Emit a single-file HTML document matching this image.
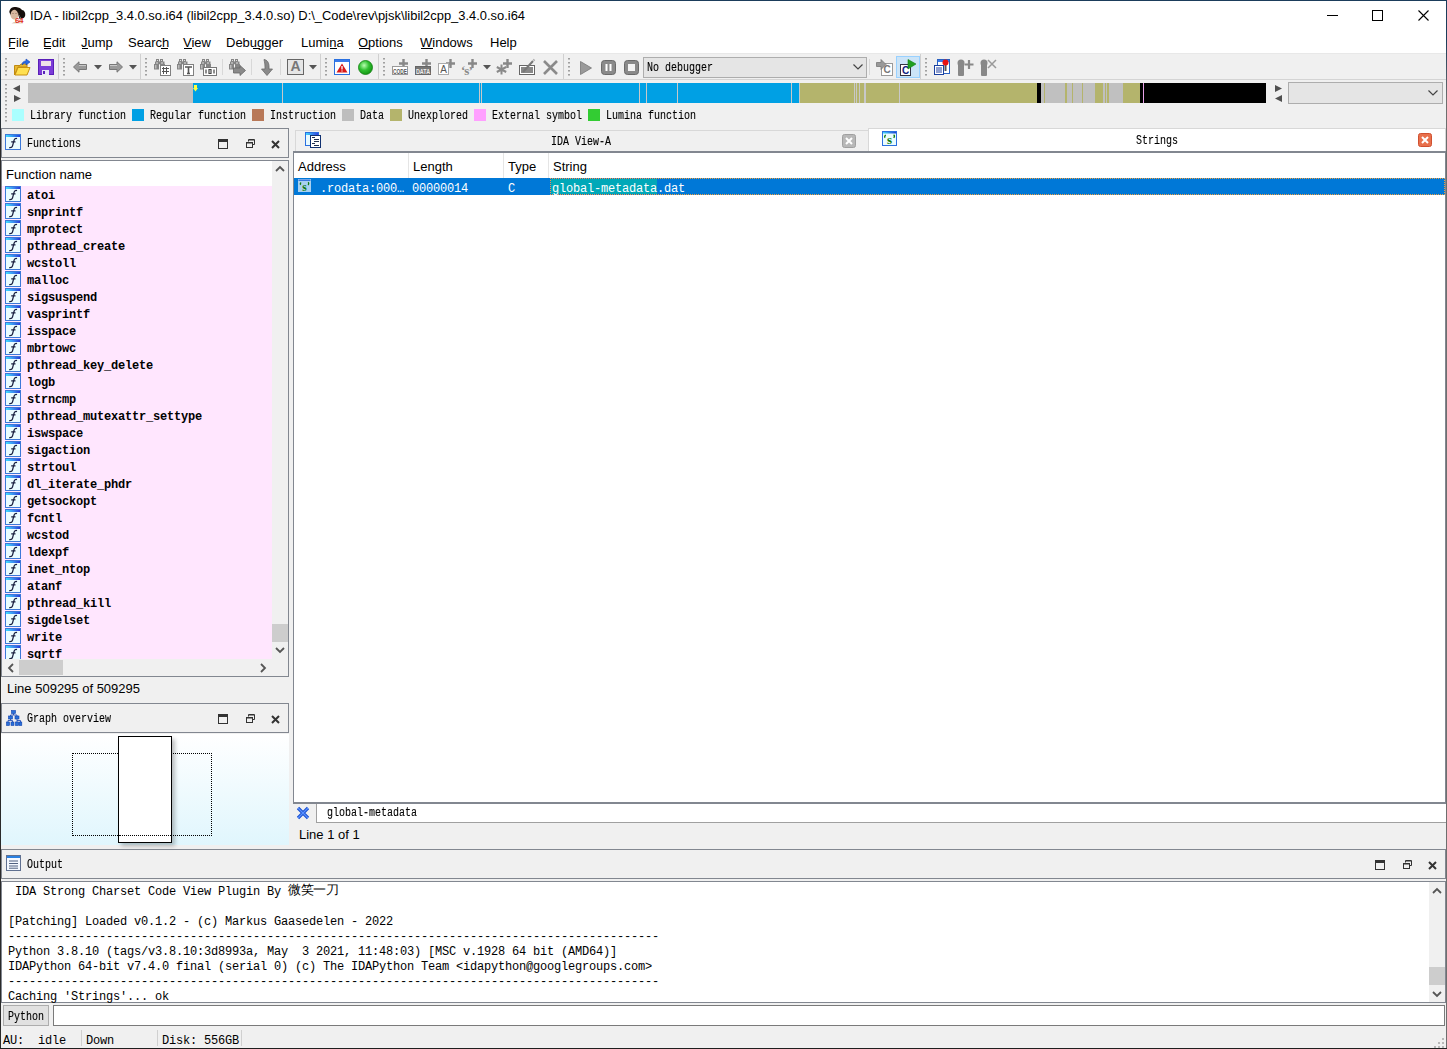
<!DOCTYPE html>
<html><head><meta charset="utf-8">
<style>
*{margin:0;padding:0;box-sizing:border-box}
html,body{width:1447px;height:1049px;overflow:hidden;background:#f0f0f0}
body{position:relative;font-family:"Liberation Sans",sans-serif;font-size:13px;color:#000}
.a{position:absolute;white-space:nowrap}
.m{font-family:"Liberation Mono",monospace}
.ss{font-family:"Liberation Mono",monospace;font-size:12px;transform:scaleX(0.8333);transform-origin:0 0;-webkit-text-stroke:0.12px #000}
.bx{position:absolute;border:1px solid #828790}
svg{position:absolute;overflow:visible}
u{text-decoration:none;border-bottom:1px solid #000}
</style></head><body>
<svg width="0" height="0" style="position:absolute"><defs><linearGradient id="gtop" x1="0" x2="1"><stop offset="0" stop-color="#40e0ff"/><stop offset="0.5" stop-color="#3a90f0"/><stop offset="1" stop-color="#2a3ad8"/></linearGradient></defs></svg>
<!-- ============ TITLE + MENU ============ -->
<div class="a" style="left:0;top:0;width:1447px;height:53px;background:#fff"></div>
<div class="a" style="left:0;top:53px;width:1447px;height:1px;background:#e8e8e8"></div>
<svg style="left:9px;top:6px" width="17" height="18"><ellipse cx="5.5" cy="8" rx="4.2" ry="5.5" fill="#d8b8a0"/><path d="M0.3 6C0.8 2 4 0.8 7 1.1C10 1.4 12 2.8 13 4C15.5 4.2 16.6 7 16.2 9.5C15.8 12 13.5 12.8 12 12.2C10.5 10 9.5 7.5 8 5.2C6.5 3.2 3.5 2.8 2 6.5L1.5 9Z" fill="#160e0a"/><path d="M8.5 6C10 8 11 11 12 12.5L10.5 13Z" fill="#2a1a14"/><path d="M2.5 17.2C5 16 9 16 14.5 17.2Z" fill="#c8a088"/><text x="6" y="16.5" font-family="Liberation Sans" font-size="8" font-weight="bold" fill="#e03018" letter-spacing="-0.5">64</text><circle cx="4" cy="7.5" r="0.6" fill="#8a6a5a"/><circle cx="7" cy="7.5" r="0.6" fill="#8a6a5a"/></svg>
<div class="a" style="left:30px;top:8px;font-size:12.92px">IDA - libil2cpp_3.4.0.so.i64 (libil2cpp_3.4.0.so) D:\_Code\rev\pjsk\libil2cpp_3.4.0.so.i64</div>
<div class="a" style="left:1327px;top:15px;width:11px;height:1px;background:#000"></div>
<div class="a" style="left:1372px;top:10px;width:11px;height:11px;border:1px solid #000"></div>
<svg style="left:1418px;top:10px" width="11" height="11"><path d="M0.5 0.5L10.5 10.5M10.5 0.5L0.5 10.5" stroke="#000" stroke-width="1.1"/></svg>
<div class="a" style="left:-1px;top:35px;font-size:13px">
<span class="a" style="left:9px">File</span>
<span class="a" style="left:44px">Edit</span>
<span class="a" style="left:82px">Jump</span>
<span class="a" style="left:129px">Search</span>
<span class="a" style="left:184px">View</span>
<span class="a" style="left:227px">Debugger</span>
<span class="a" style="left:302px">Lumina</span>
<span class="a" style="left:359px">Options</span>
<span class="a" style="left:421px">Windows</span>
<span class="a" style="left:491px">Help</span>
</div>
<div class="a" style="left:9px;top:48px;width:6px;height:1px;background:#000"></div>
<div class="a" style="left:44px;top:48px;width:7px;height:1px;background:#000"></div>
<div class="a" style="left:82px;top:48px;width:6px;height:1px;background:#000"></div>
<div class="a" style="left:161px;top:48px;width:7px;height:1px;background:#000"></div>
<div class="a" style="left:184px;top:48px;width:8px;height:1px;background:#000"></div>
<div class="a" style="left:253px;top:48px;width:7px;height:1px;background:#000"></div>
<div class="a" style="left:330px;top:48px;width:7px;height:1px;background:#000"></div>
<div class="a" style="left:359px;top:48px;width:10px;height:1px;background:#000"></div>
<div class="a" style="left:421px;top:48px;width:12px;height:1px;background:#000"></div>

<!-- ============ TOOLBAR ============ -->
<div class="a" style="left:0;top:79px;width:1447px;height:1px;background:#d4d4d4"></div>
<div class="a" style="left:5px;top:58px;width:2px;height:2px;background:#c4c4c4;border-top:1px solid #a0a0a0"></div><div class="a" style="left:5px;top:62px;width:2px;height:2px;background:#c4c4c4;border-top:1px solid #a0a0a0"></div><div class="a" style="left:5px;top:66px;width:2px;height:2px;background:#c4c4c4;border-top:1px solid #a0a0a0"></div><div class="a" style="left:5px;top:70px;width:2px;height:2px;background:#c4c4c4;border-top:1px solid #a0a0a0"></div><div class="a" style="left:5px;top:74px;width:2px;height:2px;background:#c4c4c4;border-top:1px solid #a0a0a0"></div>
<svg style="left:14px;top:59px" width="17" height="17"><path d="M0.5 6.5H6L7 5H13V8H4L0.5 16Z" fill="#e8b830" stroke="#c08a10"/><path d="M1 16L4 8.5H16L13 16Z" fill="#ffe050" stroke="#c89010"/><path d="M8 6C8 3 10 2 12 2V0L16 3L12 6V4C10 4 9 5 8 6Z" fill="#2a6ee8" stroke="#1040b0" stroke-width="0.6"/></svg>
<svg style="left:38px;top:59px" width="16" height="16"><rect x="0.5" y="0.5" width="15" height="15" fill="#7c3cd8" stroke="#5a1fb8"/><rect x="3" y="2" width="10" height="5" fill="#f0e0e8"/><rect x="4" y="11" width="7" height="5" fill="#e8e8f8"/><rect x="5" y="12" width="2" height="3" fill="#5a1fb8"/></svg>
<div class="a" style="left:58px;top:54px;width:1px;height:25px;background:#d0d0d0"></div>
<div class="a" style="left:63px;top:58px;width:2px;height:2px;background:#c4c4c4;border-top:1px solid #a0a0a0"></div><div class="a" style="left:63px;top:62px;width:2px;height:2px;background:#c4c4c4;border-top:1px solid #a0a0a0"></div><div class="a" style="left:63px;top:66px;width:2px;height:2px;background:#c4c4c4;border-top:1px solid #a0a0a0"></div><div class="a" style="left:63px;top:70px;width:2px;height:2px;background:#c4c4c4;border-top:1px solid #a0a0a0"></div><div class="a" style="left:63px;top:74px;width:2px;height:2px;background:#c4c4c4;border-top:1px solid #a0a0a0"></div>
<svg style="left:73px;top:61px" width="14" height="12"><path d="M0.5 6L6 0.8V3.5H13.5V8.5H6V11.2Z" fill="#9a9a9a" stroke="#777" stroke-width="1"/><path d="M6 4.5H13" stroke="#c8c8c8"/></svg>
<svg style="left:94px;top:65px" width="8" height="5"><path d="M0 0H8L4 4.5Z" fill="#555"/></svg>
<svg style="left:109px;top:61px" width="14" height="12"><path d="M13.5 6L8 0.8V3.5H0.5V8.5H8V11.2Z" fill="#9a9a9a" stroke="#777" stroke-width="1"/><path d="M1 4.5H8" stroke="#c8c8c8"/></svg>
<svg style="left:129px;top:65px" width="8" height="5"><path d="M0 0H8L4 4.5Z" fill="#555"/></svg>
<div class="a" style="left:140px;top:54px;width:1px;height:25px;background:#d0d0d0"></div>
<div class="a" style="left:145px;top:58px;width:2px;height:2px;background:#c4c4c4;border-top:1px solid #a0a0a0"></div><div class="a" style="left:145px;top:62px;width:2px;height:2px;background:#c4c4c4;border-top:1px solid #a0a0a0"></div><div class="a" style="left:145px;top:66px;width:2px;height:2px;background:#c4c4c4;border-top:1px solid #a0a0a0"></div><div class="a" style="left:145px;top:70px;width:2px;height:2px;background:#c4c4c4;border-top:1px solid #a0a0a0"></div><div class="a" style="left:145px;top:74px;width:2px;height:2px;background:#c4c4c4;border-top:1px solid #a0a0a0"></div>
<svg style="left:154px;top:59px" width="11" height="11"><g fill="#858585"><rect x="2" y="0" width="3" height="3"/><rect x="1" y="2.5" width="5" height="3"/><rect x="0" y="5" width="5" height="5.5"/><rect x="6" y="0" width="3" height="3"/><rect x="5.5" y="2.5" width="5" height="3"/><rect x="6" y="5" width="5" height="5.5"/></g><rect x="3" y="1" width="1" height="1" fill="#ddd"/><rect x="7" y="1" width="1" height="1" fill="#ddd"/><rect x="2" y="3.5" width="2" height="1" fill="#ddd"/><rect x="7" y="3.5" width="2" height="1" fill="#ddd"/><rect x="1" y="6" width="1.5" height="3.5" fill="#bbb"/><rect x="5" y="5.5" width="1" height="1" fill="#fff"/></svg>
<svg style="left:160px;top:65px" width="11" height="11"><rect x="0.5" y="0.5" width="10" height="10" fill="#fff" stroke="#808080"/><path d="M3.5 2V9M6.5 2V9M2 3.5H9M2 6.5H9" stroke="#555" stroke-width="1"/></svg>
<svg style="left:177px;top:59px" width="11" height="11"><g fill="#858585"><rect x="2" y="0" width="3" height="3"/><rect x="1" y="2.5" width="5" height="3"/><rect x="0" y="5" width="5" height="5.5"/><rect x="6" y="0" width="3" height="3"/><rect x="5.5" y="2.5" width="5" height="3"/><rect x="6" y="5" width="5" height="5.5"/></g><rect x="3" y="1" width="1" height="1" fill="#ddd"/><rect x="7" y="1" width="1" height="1" fill="#ddd"/><rect x="2" y="3.5" width="2" height="1" fill="#ddd"/><rect x="7" y="3.5" width="2" height="1" fill="#ddd"/><rect x="1" y="6" width="1.5" height="3.5" fill="#bbb"/><rect x="5" y="5.5" width="1" height="1" fill="#fff"/></svg>
<svg style="left:183px;top:64px" width="11" height="12"><rect x="0.5" y="0.5" width="10" height="11" fill="#fff" stroke="#808080"/><path d="M2 3H9M5.5 3V9.5M4 9.5H7" stroke="#555" stroke-width="1.6"/></svg>
<svg style="left:200px;top:59px" width="11" height="11"><g fill="#858585"><rect x="2" y="0" width="3" height="3"/><rect x="1" y="2.5" width="5" height="3"/><rect x="0" y="5" width="5" height="5.5"/><rect x="6" y="0" width="3" height="3"/><rect x="5.5" y="2.5" width="5" height="3"/><rect x="6" y="5" width="5" height="5.5"/></g><rect x="3" y="1" width="1" height="1" fill="#ddd"/><rect x="7" y="1" width="1" height="1" fill="#ddd"/><rect x="2" y="3.5" width="2" height="1" fill="#ddd"/><rect x="7" y="3.5" width="2" height="1" fill="#ddd"/><rect x="1" y="6" width="1.5" height="3.5" fill="#bbb"/><rect x="5" y="5.5" width="1" height="1" fill="#fff"/></svg>
<svg style="left:203px;top:67px" width="14" height="9"><rect x="0.5" y="0.5" width="13" height="8" fill="#fff" stroke="#777"/><path d="M3 2.5V6.5M6 2.5H8V6.5H6ZM11 2.5V6.5" fill="none" stroke="#444" stroke-width="1.2"/></svg>
<div class="a" style="left:222px;top:59px;width:1px;height:16px;background:#d8d8d8"></div>
<svg style="left:229px;top:59px" width="11" height="11"><g fill="#858585"><rect x="2" y="0" width="3" height="3"/><rect x="1" y="2.5" width="5" height="3"/><rect x="0" y="5" width="5" height="5.5"/><rect x="6" y="0" width="3" height="3"/><rect x="5.5" y="2.5" width="5" height="3"/><rect x="6" y="5" width="5" height="5.5"/></g><rect x="3" y="1" width="1" height="1" fill="#ddd"/><rect x="7" y="1" width="1" height="1" fill="#ddd"/><rect x="2" y="3.5" width="2" height="1" fill="#ddd"/><rect x="7" y="3.5" width="2" height="1" fill="#ddd"/><rect x="1" y="6" width="1.5" height="3.5" fill="#bbb"/><rect x="5" y="5.5" width="1" height="1" fill="#fff"/></svg>
<svg style="left:233px;top:65px" width="13" height="11"><path d="M0.5 3H7V0.5L12.5 5.5L7 10.5V8H0.5Z" fill="#8a8a8a" stroke="#666" stroke-width="0.8"/></svg>
<div class="a" style="left:251px;top:59px;width:1px;height:16px;background:#d8d8d8"></div>
<svg style="left:261px;top:59px" width="12" height="17"><path d="M3 0.5C6 1 8 3 8 8V10H11.5L6 16.5L0.5 10H4V8C4 5 3.5 3 3 0.5Z" fill="#8a8a8a" stroke="#6a6a6a" stroke-width="0.8"/></svg>
<div class="a" style="left:280px;top:59px;width:1px;height:16px;background:#d8d8d8"></div>
<div class="a" style="left:287px;top:59px;width:17px;height:16px;border:1px solid #666;background:#e6e6e6"></div>
<div class="a" style="left:289px;top:58px;width:13px;text-align:center;font:bold 14px 'Liberation Sans';color:#777;line-height:17px">A</div>
<svg style="left:309px;top:65px" width="8" height="5"><path d="M0 0H8L4 4.5Z" fill="#555"/></svg>
<div class="a" style="left:320px;top:54px;width:1px;height:25px;background:#d0d0d0"></div>
<div class="a" style="left:325px;top:58px;width:2px;height:2px;background:#c4c4c4;border-top:1px solid #a0a0a0"></div><div class="a" style="left:325px;top:62px;width:2px;height:2px;background:#c4c4c4;border-top:1px solid #a0a0a0"></div><div class="a" style="left:325px;top:66px;width:2px;height:2px;background:#c4c4c4;border-top:1px solid #a0a0a0"></div><div class="a" style="left:325px;top:70px;width:2px;height:2px;background:#c4c4c4;border-top:1px solid #a0a0a0"></div><div class="a" style="left:325px;top:74px;width:2px;height:2px;background:#c4c4c4;border-top:1px solid #a0a0a0"></div>
<svg style="left:334px;top:59px" width="16" height="16"><rect x="0.5" y="0.5" width="15" height="15" fill="#fff" stroke="#2a70e0"/><rect x="1" y="1" width="14" height="2" fill="#3a7aea"/><path d="M8 4.5L13.5 13.5H2.5Z" fill="#d81818"/><path d="M8 7V10.5M8 11.5V12.5" stroke="#fff" stroke-width="1.3"/></svg>
<svg style="left:358px;top:60px" width="15" height="15"><defs><radialGradient id="gb" cx="0.4" cy="0.35" r="0.7"><stop offset="0" stop-color="#b8ffb0"/><stop offset="0.5" stop-color="#30c030"/><stop offset="1" stop-color="#109010"/></radialGradient></defs><circle cx="7.5" cy="7.5" r="7" fill="url(#gb)" stroke="#108010" stroke-width="0.8"/></svg>
<div class="a" style="left:378px;top:54px;width:1px;height:25px;background:#d0d0d0"></div>
<div class="a" style="left:383px;top:58px;width:2px;height:2px;background:#c4c4c4;border-top:1px solid #a0a0a0"></div><div class="a" style="left:383px;top:62px;width:2px;height:2px;background:#c4c4c4;border-top:1px solid #a0a0a0"></div><div class="a" style="left:383px;top:66px;width:2px;height:2px;background:#c4c4c4;border-top:1px solid #a0a0a0"></div><div class="a" style="left:383px;top:70px;width:2px;height:2px;background:#c4c4c4;border-top:1px solid #a0a0a0"></div><div class="a" style="left:383px;top:74px;width:2px;height:2px;background:#c4c4c4;border-top:1px solid #a0a0a0"></div>
<svg style="left:399px;top:59px" width="9" height="9"><path d="M4.5 0V9M0 4.5H9" stroke="#888" stroke-width="2.4"/></svg>
<svg style="left:392px;top:66px" width="16" height="9"><rect x="0.5" y="0.5" width="15" height="8" fill="#fff" stroke="#999"/><text x="8" y="7.5" font-family="Liberation Sans" font-size="7.5" font-weight="bold" text-anchor="middle" fill="#555" textLength="14" lengthAdjust="spacingAndGlyphs">CODE</text></svg>
<svg style="left:422px;top:59px" width="9" height="9"><path d="M4.5 0V9M0 4.5H9" stroke="#888" stroke-width="2.4"/></svg>
<svg style="left:415px;top:66px" width="16" height="9"><rect x="0.5" y="0.5" width="15" height="8" fill="#777" stroke="#666"/><text x="8" y="7.5" font-family="Liberation Sans" font-size="7.5" font-weight="bold" text-anchor="middle" fill="#eee" textLength="14" lengthAdjust="spacingAndGlyphs">DATA</text></svg>
<svg style="left:446px;top:59px" width="9" height="9"><path d="M4.5 0V9M0 4.5H9" stroke="#888" stroke-width="2.4"/></svg>
<svg style="left:438px;top:63px" width="11" height="12"><rect x="0.5" y="0.5" width="10" height="11" fill="#fff" stroke="#aaa"/><text x="5.5" y="10" font-family="Liberation Sans" font-size="10" text-anchor="middle" fill="#555">A</text></svg>
<svg style="left:468px;top:59px" width="9" height="9"><path d="M4.5 0V9M0 4.5H9" stroke="#888" stroke-width="2.4"/></svg>
<div class="a" style="left:461px;top:63px;font:bold 13px 'Liberation Serif';color:#8a8a8a;letter-spacing:-1px">‘s’</div>
<svg style="left:483px;top:65px" width="8" height="5"><path d="M0 0H8L4 4.5Z" fill="#555"/></svg>
<svg style="left:503px;top:59px" width="9" height="9"><path d="M4.5 0V9M0 4.5H9" stroke="#888" stroke-width="2.4"/></svg>
<svg style="left:496px;top:64px" width="11" height="11"><path d="M5.5 0.5V10.5M0.8 3L10.2 8M0.8 8L10.2 3" stroke="#8a8a8a" stroke-width="2"/></svg>
<svg style="left:519px;top:59px" width="17" height="17"><rect x="0.5" y="6.5" width="15" height="9" fill="#fff" stroke="#666"/><rect x="2" y="8" width="12" height="6" fill="#888"/><path d="M4 13L14 2" stroke="#777" stroke-width="2"/><path d="M14.5 1.5L15.5 0.5" stroke="#aaa" stroke-width="2"/></svg>
<svg style="left:543px;top:60px" width="15" height="15"><path d="M1 1L14 14M14 1L1 14" stroke="#8a8a8a" stroke-width="2.6"/></svg>
<div class="a" style="left:563px;top:54px;width:1px;height:25px;background:#d0d0d0"></div>
<div class="a" style="left:568px;top:58px;width:2px;height:2px;background:#c4c4c4;border-top:1px solid #a0a0a0"></div><div class="a" style="left:568px;top:62px;width:2px;height:2px;background:#c4c4c4;border-top:1px solid #a0a0a0"></div><div class="a" style="left:568px;top:66px;width:2px;height:2px;background:#c4c4c4;border-top:1px solid #a0a0a0"></div><div class="a" style="left:568px;top:70px;width:2px;height:2px;background:#c4c4c4;border-top:1px solid #a0a0a0"></div><div class="a" style="left:568px;top:74px;width:2px;height:2px;background:#c4c4c4;border-top:1px solid #a0a0a0"></div>
<svg style="left:580px;top:61px" width="12" height="14"><path d="M0.5 0.5L11.5 7L0.5 13.5Z" fill="#9a9a9a" stroke="#777" stroke-width="0.8"/></svg>
<svg style="left:601px;top:60px" width="15" height="15"><rect x="0.5" y="0.5" width="14" height="14" rx="3" fill="#8a8a8a" stroke="#6a6a6a"/><rect x="4.5" y="4" width="2" height="7" fill="#fff"/><rect x="8.5" y="4" width="2" height="7" fill="#fff"/></svg>
<svg style="left:624px;top:60px" width="15" height="15"><rect x="0.5" y="0.5" width="14" height="14" rx="3" fill="#8a8a8a" stroke="#6a6a6a"/><rect x="4" y="4" width="7" height="7" fill="#f4f4f4"/></svg>
<div class="a" style="left:643px;top:57px;width:224px;height:21px;border:1px solid #adadad;background:#e5e5e5"></div>
<div class="a ss" style="left:647px;top:61px">No debugger</div>
<svg style="left:853px;top:64px" width="10" height="6"><path d="M0.5 0.5L5 5L9.5 0.5" fill="none" stroke="#444" stroke-width="1.2"/></svg>
<div class="a" style="left:869px;top:59px;width:1px;height:16px;background:#d8d8d8"></div>
<svg style="left:876px;top:59px" width="17" height="17"><rect x="5.5" y="4.5" width="11" height="12" fill="#fff" stroke="#999"/><text x="11" y="14" font-family="Liberation Sans" font-size="10" font-weight="bold" text-anchor="middle" fill="#777">C</text><path d="M0.5 3.5H5V0.5L10 5.5L5 10.5V7.5H0.5Z" fill="#999" stroke="#777" stroke-width="0.8"/></svg>
<div class="a" style="left:896px;top:56px;width:24px;height:22px;border:1px solid #99d1ff;background:#cce4f7"></div>
<svg style="left:900px;top:59px" width="17" height="17"><rect x="0.5" y="5.5" width="10" height="11" fill="#fff" stroke="#334"/><text x="5.5" y="14.5" font-family="Liberation Sans" font-size="10" font-weight="bold" text-anchor="middle" fill="#102080">C</text><path d="M8 0.5L16 5L8 10Z" fill="#20a020" stroke="#108010" stroke-width="0.6"/></svg>
<div class="a" style="left:920px;top:54px;width:1px;height:25px;background:#d0d0d0"></div>
<div class="a" style="left:925px;top:58px;width:2px;height:2px;background:#c4c4c4;border-top:1px solid #a0a0a0"></div><div class="a" style="left:925px;top:62px;width:2px;height:2px;background:#c4c4c4;border-top:1px solid #a0a0a0"></div><div class="a" style="left:925px;top:66px;width:2px;height:2px;background:#c4c4c4;border-top:1px solid #a0a0a0"></div><div class="a" style="left:925px;top:70px;width:2px;height:2px;background:#c4c4c4;border-top:1px solid #a0a0a0"></div><div class="a" style="left:925px;top:74px;width:2px;height:2px;background:#c4c4c4;border-top:1px solid #a0a0a0"></div>
<svg style="left:934px;top:59px" width="17" height="17"><rect x="3.5" y="0.5" width="12" height="14" fill="#fff" stroke="#2a60c0"/><rect x="4" y="1" width="11" height="2" fill="#3a7aea"/><rect x="0.5" y="6.5" width="9" height="9" fill="#fff" stroke="#1a40a0"/><path d="M2 9H8M2 11H8M2 13H8" stroke="#2040a0"/><path d="M11.5 5V12" stroke="#555" stroke-width="2"/><circle cx="11.5" cy="3.5" r="3" fill="#e81010"/></svg>
<svg style="left:957px;top:59px" width="17" height="17"><rect x="1" y="5" width="6" height="12" rx="1" fill="#888"/><circle cx="4" cy="4" r="3.5" fill="#888"/><path d="M12 1V10M7.5 5.5H16.5" stroke="#888" stroke-width="2.2"/></svg>
<svg style="left:980px;top:59px" width="17" height="17"><rect x="1" y="5" width="6" height="12" rx="1" fill="#888"/><circle cx="4" cy="4" r="3.5" fill="#888"/><path d="M8 1L16 9M16 1L8 9" stroke="#999" stroke-width="1.5"/></svg>

<!-- ============ NAV BAND ============ -->
<div class="a" style="left:5px;top:84px;width:2px;height:2px;background:#c4c4c4;border-top:1px solid #a0a0a0"></div><div class="a" style="left:5px;top:88px;width:2px;height:2px;background:#c4c4c4;border-top:1px solid #a0a0a0"></div><div class="a" style="left:5px;top:92px;width:2px;height:2px;background:#c4c4c4;border-top:1px solid #a0a0a0"></div><div class="a" style="left:5px;top:96px;width:2px;height:2px;background:#c4c4c4;border-top:1px solid #a0a0a0"></div><div class="a" style="left:5px;top:100px;width:2px;height:2px;background:#c4c4c4;border-top:1px solid #a0a0a0"></div><div class="a" style="left:5px;top:104px;width:2px;height:2px;background:#c4c4c4;border-top:1px solid #a0a0a0"></div><div class="a" style="left:5px;top:108px;width:2px;height:2px;background:#c4c4c4;border-top:1px solid #a0a0a0"></div><div class="a" style="left:5px;top:112px;width:2px;height:2px;background:#c4c4c4;border-top:1px solid #a0a0a0"></div><div class="a" style="left:5px;top:116px;width:2px;height:2px;background:#c4c4c4;border-top:1px solid #a0a0a0"></div><div class="a" style="left:5px;top:120px;width:2px;height:2px;background:#c4c4c4;border-top:1px solid #a0a0a0"></div>
<svg style="left:13px;top:85px" width="8" height="18"><path d="M7 0V7L0 3.5Z" fill="#505050"/><path d="M1 10V17L8 13.5Z" fill="#505050"/></svg>
<div class="a" style="left:1041px;top:83px;width:82px;height:20px;background:#c0c0c0"></div>
<div class="a" style="left:28px;top:83px;width:165px;height:20px;background:#c0c0c0"></div>
<div class="a" style="left:193px;top:83px;width:607px;height:20px;background:#00a0e4"></div>
<div class="a" style="left:800px;top:83px;width:237px;height:20px;background:#b4b46c"></div>
<div class="a" style="left:1037px;top:83px;width:4px;height:20px;background:#000"></div>
<div class="a" style="left:1041px;top:83px;width:24px;height:20px;background:#c0c0c0"></div>
<div class="a" style="left:1065px;top:83px;width:2px;height:20px;background:#b4b46c"></div>
<div class="a" style="left:1072px;top:83px;width:1px;height:20px;background:#b4b46c"></div>
<div class="a" style="left:1082px;top:83px;width:1px;height:20px;background:#b4b46c"></div>
<div class="a" style="left:1095px;top:83px;width:8px;height:20px;background:#b4b46c"></div>
<div class="a" style="left:1105px;top:83px;width:1px;height:20px;background:#b4b46c"></div>
<div class="a" style="left:1107px;top:83px;width:2px;height:20px;background:#b4b46c"></div>
<div class="a" style="left:1044px;top:83px;width:1px;height:20px;background:#b4b46c"></div>
<div class="a" style="left:1123px;top:83px;width:17px;height:20px;background:#b4b46c"></div>
<div class="a" style="left:1140px;top:83px;width:3px;height:20px;background:#000"></div>
<div class="a" style="left:1143px;top:83px;width:1px;height:20px;background:#e8a0e8"></div>
<div class="a" style="left:1144px;top:83px;width:122px;height:20px;background:#000"></div>
<div class="a" style="left:282px;top:83px;width:1px;height:20px;background:#c8c8c8"></div>
<div class="a" style="left:479px;top:83px;width:1px;height:20px;background:#c8c8c8"></div>
<div class="a" style="left:481px;top:83px;width:1px;height:20px;background:#c8c8c8"></div>
<div class="a" style="left:639px;top:83px;width:1px;height:20px;background:#c8c8c8"></div>
<div class="a" style="left:646px;top:83px;width:1px;height:20px;background:#c8c8c8"></div>
<div class="a" style="left:677px;top:83px;width:1px;height:20px;background:#c8c8c8"></div>
<div class="a" style="left:791px;top:83px;width:1px;height:20px;background:#c8c8c8"></div>
<div class="a" style="left:799px;top:83px;width:1px;height:20px;background:#c8c8c8"></div>
<div class="a" style="left:854px;top:83px;width:1px;height:20px;background:#c8c8c8"></div>
<div class="a" style="left:856px;top:83px;width:1px;height:20px;background:#c8c8c8"></div>
<div class="a" style="left:859px;top:83px;width:1px;height:20px;background:#c8c8c8"></div>
<div class="a" style="left:864px;top:83px;width:1px;height:20px;background:#c8c8c8"></div>
<div class="a" style="left:865px;top:83px;width:1px;height:20px;background:#c8c8c8"></div>
<div class="a" style="left:899px;top:83px;width:1px;height:20px;background:#c8c8c8"></div>
<svg style="left:193px;top:85px" width="5" height="7"><path d="M1 0H4V3H5L2.5 6.5L0 3H1Z" fill="#ffff40"/></svg>
<svg style="left:1275px;top:85px" width="8" height="18"><path d="M0 0V7L7 3.5Z" fill="#505050"/><path d="M7 10V17L0 13.5Z" fill="#505050"/></svg>
<div class="a" style="left:1288px;top:82px;width:155px;height:22px;border:1px solid #adadad;background:#e5e5e5"></div>
<svg style="left:1428px;top:90px" width="10" height="6"><path d="M0.5 0.5L5 5L9.5 0.5" fill="none" stroke="#444" stroke-width="1.2"/></svg>

<!-- ============ LEGEND ============ -->
<div class="a" style="left:12px;top:109px;width:12px;height:12px;background:#aaffff"></div>
<div class="a" style="left:132px;top:109px;width:12px;height:12px;background:#00a0e4"></div>
<div class="a" style="left:252px;top:109px;width:12px;height:12px;background:#b87858"></div>
<div class="a" style="left:342px;top:109px;width:12px;height:12px;background:#bebebe"></div>
<div class="a" style="left:390px;top:109px;width:12px;height:12px;background:#b4b46c"></div>
<div class="a" style="left:474px;top:109px;width:12px;height:12px;background:#ffa0ff"></div>
<div class="a" style="left:588px;top:109px;width:12px;height:12px;background:#33cc33"></div>
<div class="a ss" style="left:30px;top:109px">Library function</div>
<div class="a ss" style="left:150px;top:109px">Regular function</div>
<div class="a ss" style="left:270px;top:109px">Instruction</div>
<div class="a ss" style="left:360px;top:109px">Data</div>
<div class="a ss" style="left:408px;top:109px">Unexplored</div>
<div class="a ss" style="left:492px;top:109px">External symbol</div>
<div class="a ss" style="left:606px;top:109px">Lumina function</div>

<!-- ============ FUNCTIONS PANEL ============ -->
<div class="bx" style="left:1px;top:128px;width:288px;height:30px"></div>
<svg style="left:5px;top:134px" width="16" height="16"><defs><linearGradient id="fg134" x1="0" x2="1"><stop offset="0" stop-color="#40e0ff"/><stop offset="1" stop-color="#2040e0"/></linearGradient></defs><rect x="0.5" y="0.5" width="15" height="15" fill="#eafcff" stroke="#3c78d8"/><rect x="1" y="1" width="14" height="2" fill="url(#fg134)"/><path d="M12 4.6C10.5 4 9.5 4.8 9 6.5L7.5 12C7.2 13.3 6 13.8 4.2 13.6M6.2 7.8H10.5" fill="none" stroke="#1a2040" stroke-width="1.2"/></svg><div class="a ss" style="left:27px;top:137px">Functions</div><div class="a" style="left:218px;top:139px;width:10px;height:10px;border:1px solid #333;border-top:3px solid #333"></div><svg style="left:246px;top:139px" width="9" height="9"><path d="M2.5 2.5V0.5H8.5V5.5H6.5" fill="none" stroke="#333" stroke-width="1"/><rect x="0.5" y="3.5" width="6" height="5" fill="none" stroke="#333" stroke-width="1"/><path d="M1 4H6" stroke="#333" stroke-width="1"/><path d="M3 1H8" stroke="#333" stroke-width="1"/></svg><svg style="left:271px;top:140px" width="9" height="9"><path d="M1 1L8 8M8 1L1 8" stroke="#333" stroke-width="2"/></svg>
<div class="bx" style="left:1px;top:160px;width:288px;height:517px;background:#fff"></div>
<div class="a" style="left:6px;top:167px;font-size:13px">Function name</div>
<div class="a" style="left:2px;top:186px;width:270px;height:473px;background:#ffe6fe;overflow:hidden" id="flist">
<svg style="left:3px;top:0px" width="16" height="16"><rect x="0.5" y="0.5" width="15" height="15" fill="#eafcff" stroke="#3c78d8"/><rect x="1" y="1" width="14" height="2" fill="url(#gtop)"/><path d="M12 4.6C10.5 4 9.5 4.8 9 6.5L7.5 12C7.2 13.3 6 13.8 4.2 13.6M6.2 7.8H10.5" fill="none" stroke="#1a2040" stroke-width="1.2"/></svg>
<div class="a m" style="left:25px;top:3px;font-size:12px;font-weight:bold;letter-spacing:-0.2px;line-height:15px">atoi</div>
<svg style="left:3px;top:17px" width="16" height="16"><rect x="0.5" y="0.5" width="15" height="15" fill="#eafcff" stroke="#3c78d8"/><rect x="1" y="1" width="14" height="2" fill="url(#gtop)"/><path d="M12 4.6C10.5 4 9.5 4.8 9 6.5L7.5 12C7.2 13.3 6 13.8 4.2 13.6M6.2 7.8H10.5" fill="none" stroke="#1a2040" stroke-width="1.2"/></svg>
<div class="a m" style="left:25px;top:20px;font-size:12px;font-weight:bold;letter-spacing:-0.2px;line-height:15px">snprintf</div>
<svg style="left:3px;top:34px" width="16" height="16"><rect x="0.5" y="0.5" width="15" height="15" fill="#eafcff" stroke="#3c78d8"/><rect x="1" y="1" width="14" height="2" fill="url(#gtop)"/><path d="M12 4.6C10.5 4 9.5 4.8 9 6.5L7.5 12C7.2 13.3 6 13.8 4.2 13.6M6.2 7.8H10.5" fill="none" stroke="#1a2040" stroke-width="1.2"/></svg>
<div class="a m" style="left:25px;top:37px;font-size:12px;font-weight:bold;letter-spacing:-0.2px;line-height:15px">mprotect</div>
<svg style="left:3px;top:51px" width="16" height="16"><rect x="0.5" y="0.5" width="15" height="15" fill="#eafcff" stroke="#3c78d8"/><rect x="1" y="1" width="14" height="2" fill="url(#gtop)"/><path d="M12 4.6C10.5 4 9.5 4.8 9 6.5L7.5 12C7.2 13.3 6 13.8 4.2 13.6M6.2 7.8H10.5" fill="none" stroke="#1a2040" stroke-width="1.2"/></svg>
<div class="a m" style="left:25px;top:54px;font-size:12px;font-weight:bold;letter-spacing:-0.2px;line-height:15px">pthread_create</div>
<svg style="left:3px;top:68px" width="16" height="16"><rect x="0.5" y="0.5" width="15" height="15" fill="#eafcff" stroke="#3c78d8"/><rect x="1" y="1" width="14" height="2" fill="url(#gtop)"/><path d="M12 4.6C10.5 4 9.5 4.8 9 6.5L7.5 12C7.2 13.3 6 13.8 4.2 13.6M6.2 7.8H10.5" fill="none" stroke="#1a2040" stroke-width="1.2"/></svg>
<div class="a m" style="left:25px;top:71px;font-size:12px;font-weight:bold;letter-spacing:-0.2px;line-height:15px">wcstoll</div>
<svg style="left:3px;top:85px" width="16" height="16"><rect x="0.5" y="0.5" width="15" height="15" fill="#eafcff" stroke="#3c78d8"/><rect x="1" y="1" width="14" height="2" fill="url(#gtop)"/><path d="M12 4.6C10.5 4 9.5 4.8 9 6.5L7.5 12C7.2 13.3 6 13.8 4.2 13.6M6.2 7.8H10.5" fill="none" stroke="#1a2040" stroke-width="1.2"/></svg>
<div class="a m" style="left:25px;top:88px;font-size:12px;font-weight:bold;letter-spacing:-0.2px;line-height:15px">malloc</div>
<svg style="left:3px;top:102px" width="16" height="16"><rect x="0.5" y="0.5" width="15" height="15" fill="#eafcff" stroke="#3c78d8"/><rect x="1" y="1" width="14" height="2" fill="url(#gtop)"/><path d="M12 4.6C10.5 4 9.5 4.8 9 6.5L7.5 12C7.2 13.3 6 13.8 4.2 13.6M6.2 7.8H10.5" fill="none" stroke="#1a2040" stroke-width="1.2"/></svg>
<div class="a m" style="left:25px;top:105px;font-size:12px;font-weight:bold;letter-spacing:-0.2px;line-height:15px">sigsuspend</div>
<svg style="left:3px;top:119px" width="16" height="16"><rect x="0.5" y="0.5" width="15" height="15" fill="#eafcff" stroke="#3c78d8"/><rect x="1" y="1" width="14" height="2" fill="url(#gtop)"/><path d="M12 4.6C10.5 4 9.5 4.8 9 6.5L7.5 12C7.2 13.3 6 13.8 4.2 13.6M6.2 7.8H10.5" fill="none" stroke="#1a2040" stroke-width="1.2"/></svg>
<div class="a m" style="left:25px;top:122px;font-size:12px;font-weight:bold;letter-spacing:-0.2px;line-height:15px">vasprintf</div>
<svg style="left:3px;top:136px" width="16" height="16"><rect x="0.5" y="0.5" width="15" height="15" fill="#eafcff" stroke="#3c78d8"/><rect x="1" y="1" width="14" height="2" fill="url(#gtop)"/><path d="M12 4.6C10.5 4 9.5 4.8 9 6.5L7.5 12C7.2 13.3 6 13.8 4.2 13.6M6.2 7.8H10.5" fill="none" stroke="#1a2040" stroke-width="1.2"/></svg>
<div class="a m" style="left:25px;top:139px;font-size:12px;font-weight:bold;letter-spacing:-0.2px;line-height:15px">isspace</div>
<svg style="left:3px;top:153px" width="16" height="16"><rect x="0.5" y="0.5" width="15" height="15" fill="#eafcff" stroke="#3c78d8"/><rect x="1" y="1" width="14" height="2" fill="url(#gtop)"/><path d="M12 4.6C10.5 4 9.5 4.8 9 6.5L7.5 12C7.2 13.3 6 13.8 4.2 13.6M6.2 7.8H10.5" fill="none" stroke="#1a2040" stroke-width="1.2"/></svg>
<div class="a m" style="left:25px;top:156px;font-size:12px;font-weight:bold;letter-spacing:-0.2px;line-height:15px">mbrtowc</div>
<svg style="left:3px;top:170px" width="16" height="16"><rect x="0.5" y="0.5" width="15" height="15" fill="#eafcff" stroke="#3c78d8"/><rect x="1" y="1" width="14" height="2" fill="url(#gtop)"/><path d="M12 4.6C10.5 4 9.5 4.8 9 6.5L7.5 12C7.2 13.3 6 13.8 4.2 13.6M6.2 7.8H10.5" fill="none" stroke="#1a2040" stroke-width="1.2"/></svg>
<div class="a m" style="left:25px;top:173px;font-size:12px;font-weight:bold;letter-spacing:-0.2px;line-height:15px">pthread_key_delete</div>
<svg style="left:3px;top:187px" width="16" height="16"><rect x="0.5" y="0.5" width="15" height="15" fill="#eafcff" stroke="#3c78d8"/><rect x="1" y="1" width="14" height="2" fill="url(#gtop)"/><path d="M12 4.6C10.5 4 9.5 4.8 9 6.5L7.5 12C7.2 13.3 6 13.8 4.2 13.6M6.2 7.8H10.5" fill="none" stroke="#1a2040" stroke-width="1.2"/></svg>
<div class="a m" style="left:25px;top:190px;font-size:12px;font-weight:bold;letter-spacing:-0.2px;line-height:15px">logb</div>
<svg style="left:3px;top:204px" width="16" height="16"><rect x="0.5" y="0.5" width="15" height="15" fill="#eafcff" stroke="#3c78d8"/><rect x="1" y="1" width="14" height="2" fill="url(#gtop)"/><path d="M12 4.6C10.5 4 9.5 4.8 9 6.5L7.5 12C7.2 13.3 6 13.8 4.2 13.6M6.2 7.8H10.5" fill="none" stroke="#1a2040" stroke-width="1.2"/></svg>
<div class="a m" style="left:25px;top:207px;font-size:12px;font-weight:bold;letter-spacing:-0.2px;line-height:15px">strncmp</div>
<svg style="left:3px;top:221px" width="16" height="16"><rect x="0.5" y="0.5" width="15" height="15" fill="#eafcff" stroke="#3c78d8"/><rect x="1" y="1" width="14" height="2" fill="url(#gtop)"/><path d="M12 4.6C10.5 4 9.5 4.8 9 6.5L7.5 12C7.2 13.3 6 13.8 4.2 13.6M6.2 7.8H10.5" fill="none" stroke="#1a2040" stroke-width="1.2"/></svg>
<div class="a m" style="left:25px;top:224px;font-size:12px;font-weight:bold;letter-spacing:-0.2px;line-height:15px">pthread_mutexattr_settype</div>
<svg style="left:3px;top:238px" width="16" height="16"><rect x="0.5" y="0.5" width="15" height="15" fill="#eafcff" stroke="#3c78d8"/><rect x="1" y="1" width="14" height="2" fill="url(#gtop)"/><path d="M12 4.6C10.5 4 9.5 4.8 9 6.5L7.5 12C7.2 13.3 6 13.8 4.2 13.6M6.2 7.8H10.5" fill="none" stroke="#1a2040" stroke-width="1.2"/></svg>
<div class="a m" style="left:25px;top:241px;font-size:12px;font-weight:bold;letter-spacing:-0.2px;line-height:15px">iswspace</div>
<svg style="left:3px;top:255px" width="16" height="16"><rect x="0.5" y="0.5" width="15" height="15" fill="#eafcff" stroke="#3c78d8"/><rect x="1" y="1" width="14" height="2" fill="url(#gtop)"/><path d="M12 4.6C10.5 4 9.5 4.8 9 6.5L7.5 12C7.2 13.3 6 13.8 4.2 13.6M6.2 7.8H10.5" fill="none" stroke="#1a2040" stroke-width="1.2"/></svg>
<div class="a m" style="left:25px;top:258px;font-size:12px;font-weight:bold;letter-spacing:-0.2px;line-height:15px">sigaction</div>
<svg style="left:3px;top:272px" width="16" height="16"><rect x="0.5" y="0.5" width="15" height="15" fill="#eafcff" stroke="#3c78d8"/><rect x="1" y="1" width="14" height="2" fill="url(#gtop)"/><path d="M12 4.6C10.5 4 9.5 4.8 9 6.5L7.5 12C7.2 13.3 6 13.8 4.2 13.6M6.2 7.8H10.5" fill="none" stroke="#1a2040" stroke-width="1.2"/></svg>
<div class="a m" style="left:25px;top:275px;font-size:12px;font-weight:bold;letter-spacing:-0.2px;line-height:15px">strtoul</div>
<svg style="left:3px;top:289px" width="16" height="16"><rect x="0.5" y="0.5" width="15" height="15" fill="#eafcff" stroke="#3c78d8"/><rect x="1" y="1" width="14" height="2" fill="url(#gtop)"/><path d="M12 4.6C10.5 4 9.5 4.8 9 6.5L7.5 12C7.2 13.3 6 13.8 4.2 13.6M6.2 7.8H10.5" fill="none" stroke="#1a2040" stroke-width="1.2"/></svg>
<div class="a m" style="left:25px;top:292px;font-size:12px;font-weight:bold;letter-spacing:-0.2px;line-height:15px">dl_iterate_phdr</div>
<svg style="left:3px;top:306px" width="16" height="16"><rect x="0.5" y="0.5" width="15" height="15" fill="#eafcff" stroke="#3c78d8"/><rect x="1" y="1" width="14" height="2" fill="url(#gtop)"/><path d="M12 4.6C10.5 4 9.5 4.8 9 6.5L7.5 12C7.2 13.3 6 13.8 4.2 13.6M6.2 7.8H10.5" fill="none" stroke="#1a2040" stroke-width="1.2"/></svg>
<div class="a m" style="left:25px;top:309px;font-size:12px;font-weight:bold;letter-spacing:-0.2px;line-height:15px">getsockopt</div>
<svg style="left:3px;top:323px" width="16" height="16"><rect x="0.5" y="0.5" width="15" height="15" fill="#eafcff" stroke="#3c78d8"/><rect x="1" y="1" width="14" height="2" fill="url(#gtop)"/><path d="M12 4.6C10.5 4 9.5 4.8 9 6.5L7.5 12C7.2 13.3 6 13.8 4.2 13.6M6.2 7.8H10.5" fill="none" stroke="#1a2040" stroke-width="1.2"/></svg>
<div class="a m" style="left:25px;top:326px;font-size:12px;font-weight:bold;letter-spacing:-0.2px;line-height:15px">fcntl</div>
<svg style="left:3px;top:340px" width="16" height="16"><rect x="0.5" y="0.5" width="15" height="15" fill="#eafcff" stroke="#3c78d8"/><rect x="1" y="1" width="14" height="2" fill="url(#gtop)"/><path d="M12 4.6C10.5 4 9.5 4.8 9 6.5L7.5 12C7.2 13.3 6 13.8 4.2 13.6M6.2 7.8H10.5" fill="none" stroke="#1a2040" stroke-width="1.2"/></svg>
<div class="a m" style="left:25px;top:343px;font-size:12px;font-weight:bold;letter-spacing:-0.2px;line-height:15px">wcstod</div>
<svg style="left:3px;top:357px" width="16" height="16"><rect x="0.5" y="0.5" width="15" height="15" fill="#eafcff" stroke="#3c78d8"/><rect x="1" y="1" width="14" height="2" fill="url(#gtop)"/><path d="M12 4.6C10.5 4 9.5 4.8 9 6.5L7.5 12C7.2 13.3 6 13.8 4.2 13.6M6.2 7.8H10.5" fill="none" stroke="#1a2040" stroke-width="1.2"/></svg>
<div class="a m" style="left:25px;top:360px;font-size:12px;font-weight:bold;letter-spacing:-0.2px;line-height:15px">ldexpf</div>
<svg style="left:3px;top:374px" width="16" height="16"><rect x="0.5" y="0.5" width="15" height="15" fill="#eafcff" stroke="#3c78d8"/><rect x="1" y="1" width="14" height="2" fill="url(#gtop)"/><path d="M12 4.6C10.5 4 9.5 4.8 9 6.5L7.5 12C7.2 13.3 6 13.8 4.2 13.6M6.2 7.8H10.5" fill="none" stroke="#1a2040" stroke-width="1.2"/></svg>
<div class="a m" style="left:25px;top:377px;font-size:12px;font-weight:bold;letter-spacing:-0.2px;line-height:15px">inet_ntop</div>
<svg style="left:3px;top:391px" width="16" height="16"><rect x="0.5" y="0.5" width="15" height="15" fill="#eafcff" stroke="#3c78d8"/><rect x="1" y="1" width="14" height="2" fill="url(#gtop)"/><path d="M12 4.6C10.5 4 9.5 4.8 9 6.5L7.5 12C7.2 13.3 6 13.8 4.2 13.6M6.2 7.8H10.5" fill="none" stroke="#1a2040" stroke-width="1.2"/></svg>
<div class="a m" style="left:25px;top:394px;font-size:12px;font-weight:bold;letter-spacing:-0.2px;line-height:15px">atanf</div>
<svg style="left:3px;top:408px" width="16" height="16"><rect x="0.5" y="0.5" width="15" height="15" fill="#eafcff" stroke="#3c78d8"/><rect x="1" y="1" width="14" height="2" fill="url(#gtop)"/><path d="M12 4.6C10.5 4 9.5 4.8 9 6.5L7.5 12C7.2 13.3 6 13.8 4.2 13.6M6.2 7.8H10.5" fill="none" stroke="#1a2040" stroke-width="1.2"/></svg>
<div class="a m" style="left:25px;top:411px;font-size:12px;font-weight:bold;letter-spacing:-0.2px;line-height:15px">pthread_kill</div>
<svg style="left:3px;top:425px" width="16" height="16"><rect x="0.5" y="0.5" width="15" height="15" fill="#eafcff" stroke="#3c78d8"/><rect x="1" y="1" width="14" height="2" fill="url(#gtop)"/><path d="M12 4.6C10.5 4 9.5 4.8 9 6.5L7.5 12C7.2 13.3 6 13.8 4.2 13.6M6.2 7.8H10.5" fill="none" stroke="#1a2040" stroke-width="1.2"/></svg>
<div class="a m" style="left:25px;top:428px;font-size:12px;font-weight:bold;letter-spacing:-0.2px;line-height:15px">sigdelset</div>
<svg style="left:3px;top:442px" width="16" height="16"><rect x="0.5" y="0.5" width="15" height="15" fill="#eafcff" stroke="#3c78d8"/><rect x="1" y="1" width="14" height="2" fill="url(#gtop)"/><path d="M12 4.6C10.5 4 9.5 4.8 9 6.5L7.5 12C7.2 13.3 6 13.8 4.2 13.6M6.2 7.8H10.5" fill="none" stroke="#1a2040" stroke-width="1.2"/></svg>
<div class="a m" style="left:25px;top:445px;font-size:12px;font-weight:bold;letter-spacing:-0.2px;line-height:15px">write</div>
<svg style="left:3px;top:459px" width="16" height="16"><rect x="0.5" y="0.5" width="15" height="15" fill="#eafcff" stroke="#3c78d8"/><rect x="1" y="1" width="14" height="2" fill="url(#gtop)"/><path d="M12 4.6C10.5 4 9.5 4.8 9 6.5L7.5 12C7.2 13.3 6 13.8 4.2 13.6M6.2 7.8H10.5" fill="none" stroke="#1a2040" stroke-width="1.2"/></svg>
<div class="a m" style="left:25px;top:462px;font-size:12px;font-weight:bold;letter-spacing:-0.2px;line-height:15px">sqrtf</div>
</div>
<div class="a" style="left:272px;top:161px;width:16px;height:498px;background:#f0f0f0"></div>
<div class="a" style="left:272px;top:624px;width:16px;height:18px;background:#cdcdcd"></div>
<svg style="left:275px;top:166px" width="10" height="6"><path d="M1 5L5 1L9 5" fill="none" stroke="#555" stroke-width="1.8"/></svg>
<svg style="left:275px;top:647px" width="10" height="6"><path d="M1 1L5 5L9 1" fill="none" stroke="#555" stroke-width="1.8"/></svg>
<div class="a" style="left:2px;top:659px;width:286px;height:17px;background:#f0f0f0"></div>
<div class="a" style="left:19px;top:660px;width:44px;height:15px;background:#cdcdcd"></div>
<svg style="left:8px;top:663px" width="6" height="10"><path d="M5 1L1 5L5 9" fill="none" stroke="#555" stroke-width="1.8"/></svg>
<svg style="left:260px;top:663px" width="6" height="10"><path d="M1 1L5 5L1 9" fill="none" stroke="#555" stroke-width="1.8"/></svg>
<div class="a" style="left:7px;top:681px;font-size:13px">Line 509295 of 509295</div>

<!-- graph overview -->
<div class="bx" style="left:1px;top:703px;width:288px;height:30px"></div>
<svg style="left:6px;top:710px" width="16" height="16"><g fill="#2a70d8" stroke="#1040b0" stroke-width="0.6"><rect x="5.5" y="0.5" width="4" height="3"/><rect x="2.5" y="6" width="4" height="3"/><rect x="9" y="6" width="4" height="3"/><rect x="0.5" y="12" width="3" height="3.5"/><rect x="5" y="12" width="3" height="3.5"/><rect x="9.5" y="12" width="3" height="3.5"/><rect x="13" y="12" width="2.8" height="3.5"/></g><path d="M7.5 3.5V5M4.5 5H11V6M4.5 5V6M4.5 9V10.5H2V12M4.5 10.5H6.5V12M11 9V10.5H11V12M11 10.5H14.5V12" fill="none" stroke="#1040b0" stroke-width="0.8"/></svg><div class="a ss" style="left:27px;top:712px">Graph overview</div><div class="a" style="left:218px;top:714px;width:10px;height:10px;border:1px solid #333;border-top:3px solid #333"></div><svg style="left:246px;top:714px" width="9" height="9"><path d="M2.5 2.5V0.5H8.5V5.5H6.5" fill="none" stroke="#333" stroke-width="1"/><rect x="0.5" y="3.5" width="6" height="5" fill="none" stroke="#333" stroke-width="1"/><path d="M1 4H6" stroke="#333" stroke-width="1"/><path d="M3 1H8" stroke="#333" stroke-width="1"/></svg><svg style="left:271px;top:715px" width="9" height="9"><path d="M1 1L8 8M8 1L1 8" stroke="#333" stroke-width="2"/></svg>
<div class="a" style="left:1px;top:734px;width:288px;height:111px;background:linear-gradient(#ffffff,#e0f6fd)"></div>
<div class="a" style="left:72px;top:753px;width:140px;height:83px;border:1px dotted #000"></div>
<div class="a" style="left:121px;top:739px;width:54px;height:107px;background:rgba(0,0,0,0.25);filter:blur(2px)"></div>
<div class="a" style="left:118px;top:736px;width:54px;height:107px;background:#fff;border:1px solid #000"></div>
<div class="a" style="left:119px;top:835px;width:52px;height:1px;border-top:1px dotted #000"></div>

<!-- ============ RIGHT: TABS + STRINGS ============ -->
<div class="a" style="left:295px;top:130px;width:574px;height:22px;background:#f0f0f0;border-top:1px solid #d8d8d8;border-left:1px solid #d8d8d8"></div>
<div class="a" style="left:868px;top:128px;width:578px;height:24px;background:#fff;border-top:1px solid #d8d8d8;border-left:1px solid #d8d8d8;border-right:1px solid #d8d8d8"></div>
<svg style="left:305px;top:132px" width="17" height="17"><defs><linearGradient id="tg" x1="0" x2="1"><stop offset="0" stop-color="#40d8ff"/><stop offset="1" stop-color="#3040e0"/></linearGradient></defs><rect x="0.5" y="0.5" width="13" height="13" fill="#e8faff" stroke="#2a70e0"/><rect x="1" y="1" width="12" height="2" fill="url(#tg)"/><rect x="5.5" y="3.5" width="10" height="12" fill="#fff" stroke="#103070"/><path d="M7 5.5H10M9 7.5H14M9 9.5H14M7 11.5H10M9 13.5H14" stroke="#203050" stroke-width="1"/></svg>
<div class="a ss" style="left:551px;top:135px">IDA View-A</div>
<svg style="left:842px;top:134px" width="14" height="14"><rect x="0.5" y="0.5" width="13" height="13" rx="2" fill="#b8b8b8" stroke="#a0a0a0"/><path d="M4 4L10 10M10 4L4 10" stroke="#fff" stroke-width="2"/></svg>
<svg style="left:882px;top:131px" width="15" height="15"><defs><linearGradient id="sg882" x1="0" x2="1"><stop offset="0" stop-color="#40d8ff"/><stop offset="1" stop-color="#2040d0"/></linearGradient></defs><rect x="0.5" y="0.5" width="14" height="14" fill="#eafcff" stroke="#2a70e0"/><rect x="1" y="1" width="13" height="1.5" fill="url(#sg882)"/><text x="7.6" y="13.2" font-family="Liberation Serif" font-size="13" font-weight="bold" text-anchor="middle" fill="#107a10">s</text><path d="M3.8 4.2C2.6 4.8 2.4 6 3.2 6.6" fill="none" stroke="#107a10" stroke-width="1.4"/><path d="M11.6 3.8C12.8 4.4 12.6 6 11.6 6.8" fill="none" stroke="#107a10" stroke-width="1.4"/></svg>
<div class="a ss" style="left:1136px;top:134px">Strings</div>
<svg style="left:1418px;top:133px" width="14" height="14"><rect x="0.5" y="0.5" width="13" height="13" rx="2" fill="#e8704c" stroke="#d05030"/><path d="M4 4L10 10M10 4L4 10" stroke="#fff" stroke-width="2"/></svg>
<div class="a" style="left:293px;top:151px;width:1153px;height:653px;background:#fff;border:1px solid #828790;border-top:2px solid #828790;border-bottom:2px solid #828790"></div>
<div class="a" style="left:408px;top:153px;width:1px;height:25px;background:#e5e5e5"></div>
<div class="a" style="left:503px;top:153px;width:1px;height:25px;background:#e5e5e5"></div>
<div class="a" style="left:548px;top:153px;width:1px;height:25px;background:#e5e5e5"></div>
<div class="a" style="left:298px;top:159px;font-size:13px">Address</div>
<div class="a" style="left:413px;top:159px;font-size:13px">Length</div>
<div class="a" style="left:508px;top:159px;font-size:13px">Type</div>
<div class="a" style="left:553px;top:159px;font-size:13px">String</div>
<div class="a" style="left:294px;top:178px;width:1151px;height:17px;background:#0078d7"></div>
<div class="a" style="left:550px;top:178px;width:895px;height:17px;border:1px dotted #f0a040"></div>
<div class="a" style="left:551px;top:179px;width:106px;height:15px;background:#00a8b8"></div>
<svg style="left:298px;top:179px" width="13" height="13"><rect x="0" y="0" width="13" height="13" fill="#a8d0f0"/><rect x="0.5" y="0.5" width="12" height="1.5" fill="#3a78e0"/><text x="6.6" y="11.6" font-family="Liberation Serif" font-size="11.5" font-weight="bold" text-anchor="middle" fill="#107a10">s</text><path d="M3.2 3.6C2.2 4.2 2 5.2 2.8 5.8" fill="none" stroke="#107a10" stroke-width="1.3"/><path d="M10 3.4C11 3.9 10.9 5.2 10 5.9" fill="none" stroke="#107a10" stroke-width="1.3"/></svg>
<div class="a m" style="left:320px;top:182px;font-size:12px;letter-spacing:-0.2px;color:#fff;line-height:14px">.rodata:000…</div>
<div class="a m" style="left:412px;top:182px;font-size:12px;letter-spacing:-0.2px;color:#fff;line-height:14px">00000014</div>
<div class="a m" style="left:508px;top:182px;font-size:12px;letter-spacing:-0.2px;color:#fff;line-height:14px">C</div>
<div class="a m" style="left:552px;top:182px;font-size:12px;letter-spacing:-0.2px;color:#fff;line-height:14px">global-metadata.dat</div>

<!-- search bar -->
<svg style="left:296px;top:806px" width="14" height="14"><path d="M2 2L12 12M12 2L2 12" stroke="#1a50d0" stroke-width="3.2"/><path d="M2 2L12 12M12 2L2 12" stroke="#5a90ff" stroke-width="1.2"/></svg><div class="a" style="left:316px;top:804px;width:1130px;height:19px;background:#fff;border-left:1px solid #a0a0a0;border-bottom:1px solid #a0a0a0"></div><div class="a ss" style="left:327px;top:806px">global-metadata</div><div class="a" style="left:299px;top:827px;font-size:13px">Line 1 of 1</div>

<!-- ============ OUTPUT ============ -->
<div class="bx" style="left:1px;top:849px;width:1445px;height:30px"></div>
<svg style="left:6px;top:855px" width="15" height="16"><rect x="0.5" y="0.5" width="14" height="15" fill="#f4f8ff" stroke="#607090"/><rect x="1" y="1" width="13" height="2" fill="#2a80e0"/><path d="M3 6H12M3 8.5H12M3 11H12M3 13.2H12" stroke="#506080" stroke-width="1"/></svg><div class="a ss" style="left:27px;top:858px">Output</div><div class="a" style="left:1375px;top:860px;width:10px;height:10px;border:1px solid #333;border-top:3px solid #333"></div><svg style="left:1403px;top:860px" width="9" height="9"><path d="M2.5 2.5V0.5H8.5V5.5H6.5" fill="none" stroke="#333" stroke-width="1"/><rect x="0.5" y="3.5" width="6" height="5" fill="none" stroke="#333" stroke-width="1"/><path d="M1 4H6" stroke="#333" stroke-width="1"/><path d="M3 1H8" stroke="#333" stroke-width="1"/></svg><svg style="left:1428px;top:861px" width="9" height="9"><path d="M1 1L8 8M8 1L1 8" stroke="#333" stroke-width="2"/></svg>
<div class="bx" style="left:1px;top:881px;width:1445px;height:122px;background:#fff"></div>
<div class="a m" style="left:8px;top:885px;font-size:12px;letter-spacing:-0.2px;line-height:14px;white-space:pre"> IDA Strong Charset Code View Plugin By <span style="font-size:13px;position:relative;top:-1px;letter-spacing:-0.3px">微笑一刀</span></div>
<div class="a m" style="left:8px;top:915px;font-size:12px;letter-spacing:-0.2px;line-height:14px;white-space:pre">[Patching] Loaded v0.1.2 - (c) Markus Gaasedelen - 2022</div>
<div class="a m" style="left:8px;top:930px;font-size:12px;letter-spacing:-0.2px;line-height:14px;white-space:pre">---------------------------------------------------------------------------------------------</div>
<div class="a m" style="left:8px;top:945px;font-size:12px;letter-spacing:-0.2px;line-height:14px;white-space:pre">Python 3.8.10 (tags/v3.8.10:3d8993a, May  3 2021, 11:48:03) [MSC v.1928 64 bit (AMD64)]</div>
<div class="a m" style="left:8px;top:960px;font-size:12px;letter-spacing:-0.2px;line-height:14px;white-space:pre">IDAPython 64-bit v7.4.0 final (serial 0) (c) The IDAPython Team &lt;idapython@googlegroups.com&gt;</div>
<div class="a m" style="left:8px;top:975px;font-size:12px;letter-spacing:-0.2px;line-height:14px;white-space:pre">---------------------------------------------------------------------------------------------</div>
<div class="a m" style="left:8px;top:990px;font-size:12px;letter-spacing:-0.2px;line-height:14px;white-space:pre">Caching 'Strings'... ok</div>
<div class="a" style="left:1429px;top:882px;width:16px;height:120px;background:#f0f0f0"></div>
<div class="a" style="left:1429px;top:967px;width:16px;height:18px;background:#cdcdcd"></div>
<svg style="left:1432px;top:888px" width="10" height="6"><path d="M1 5L5 1L9 5" fill="none" stroke="#555" stroke-width="1.8"/></svg>
<svg style="left:1432px;top:991px" width="10" height="6"><path d="M1 1L5 5L9 1" fill="none" stroke="#555" stroke-width="1.8"/></svg>

<!-- python + status -->
<div class="a" style="left:3px;top:1005px;width:46px;height:21px;background:#e1e1e1;border:1px solid #adadad"></div>
<div class="a ss" style="left:8px;top:1010px">Python</div>
<div class="a" style="left:53px;top:1005px;width:1392px;height:21px;background:#fff;border:1px solid #7a7a7a"></div>
<div class="a m" style="left:3px;top:1034px;white-space:pre;font-size:12px;letter-spacing:-0.2px">AU:  idle</div>
<div class="a m" style="left:86px;top:1034px;font-size:12px;letter-spacing:-0.2px">Down</div>
<div class="a m" style="left:162px;top:1034px;font-size:12px;letter-spacing:-0.2px">Disk: 556GB</div>
<div class="a" style="left:81px;top:1030px;width:1px;height:16px;background:#d0d0d0"></div>
<div class="a" style="left:157px;top:1030px;width:1px;height:16px;background:#d0d0d0"></div>
<div class="a" style="left:241px;top:1030px;width:1px;height:16px;background:#d0d0d0"></div>
<div class="a" style="left:1442px;top:1038px;width:2px;height:2px;background:#b8b8b8"></div>
<div class="a" style="left:1438px;top:1042px;width:2px;height:2px;background:#b8b8b8"></div>
<div class="a" style="left:1442px;top:1042px;width:2px;height:2px;background:#b8b8b8"></div>
<div class="a" style="left:1434px;top:1046px;width:2px;height:2px;background:#b8b8b8"></div>
<div class="a" style="left:1438px;top:1046px;width:2px;height:2px;background:#b8b8b8"></div>
<div class="a" style="left:1442px;top:1046px;width:2px;height:2px;background:#b8b8b8"></div>

<!-- frame -->
<div class="a" style="left:0;top:0;width:1447px;height:1px;background:#1b3d5b"></div>
<div class="a" style="left:0;top:0;width:1px;height:1049px;background:linear-gradient(#1b3d5b,#1b3d5b 60px,#2a2a2a 140px,#2a2a2a)"></div>
<div class="a" style="left:1446px;top:0;width:1px;height:1049px;background:linear-gradient(#1b3d5b,#1b3d5b 40px,#6e6e6e 100px,#6e6e6e)"></div>
<div class="a" style="left:0;top:1048px;width:1447px;height:1px;background:#1f1f1f"></div>
</body></html>
